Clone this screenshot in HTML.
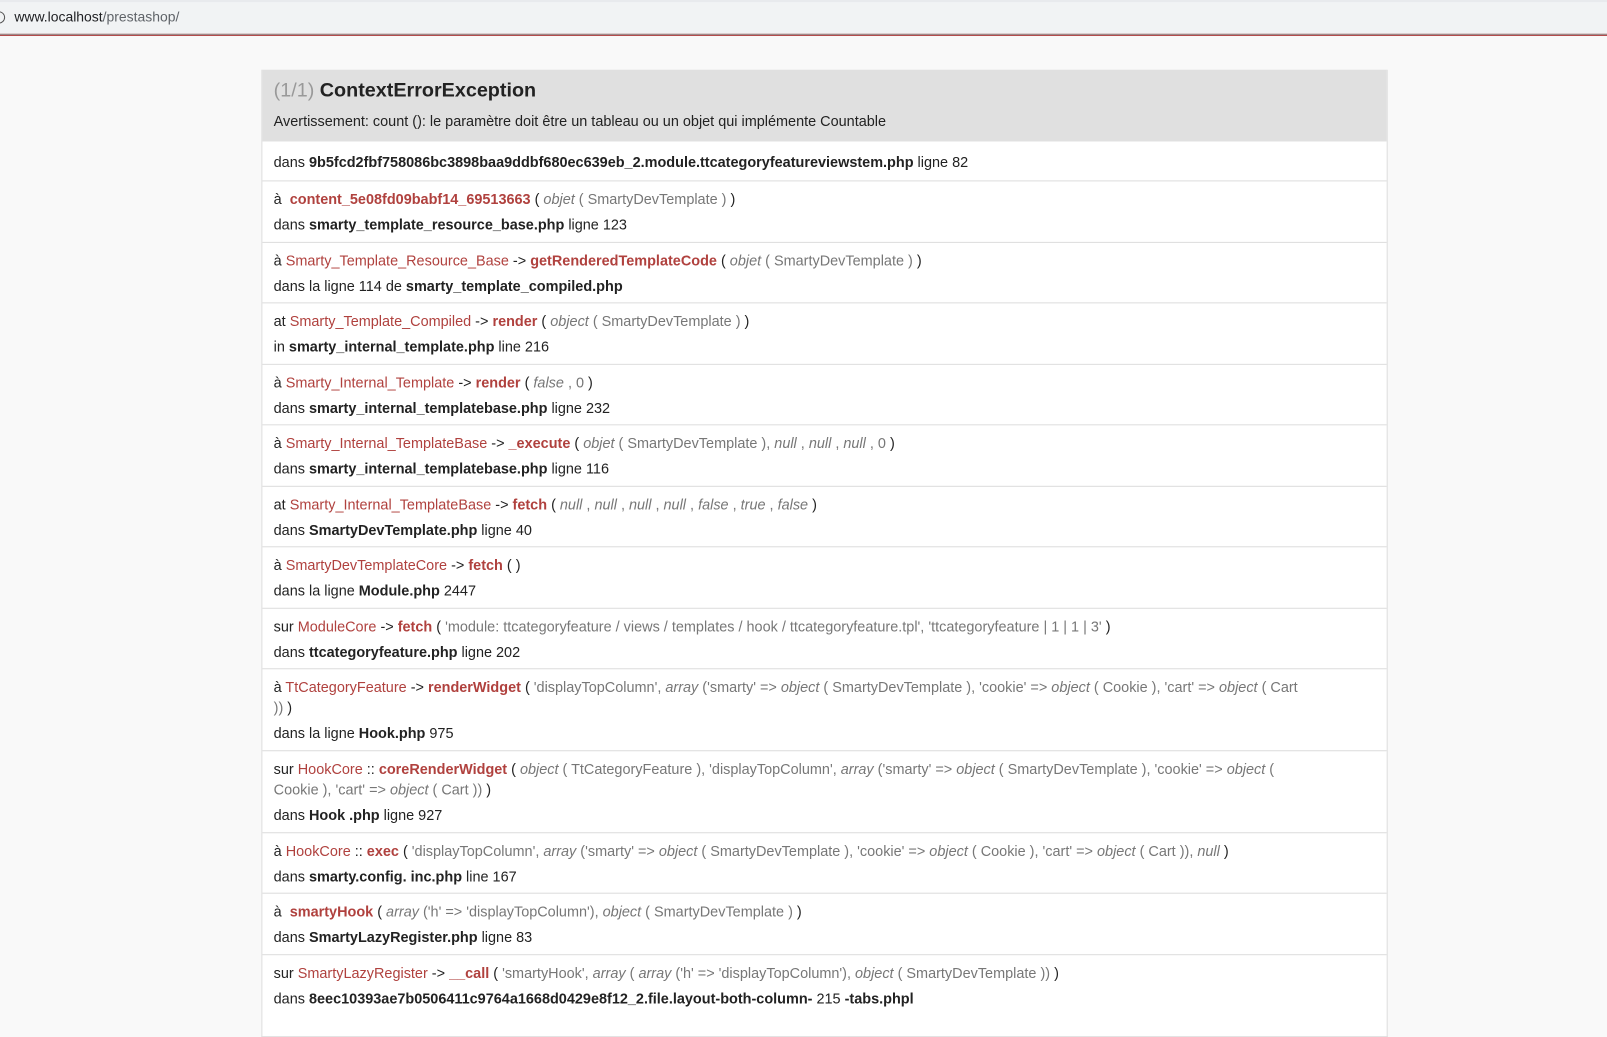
<!DOCTYPE html>
<html><head><meta charset="utf-8"><style>
*{margin:0;padding:0;box-sizing:border-box}
body{width:1607px;height:1003px;overflow:hidden;background:#f9f9f9;font-family:"Liberation Sans",Arial,sans-serif;font-size:14.1px;color:#222}
#w{position:absolute;left:0;top:0;width:1568px;height:980px;transform:scale(1.0249);transform-origin:0 0}
.bar{position:absolute;left:0;top:0;width:1568px;height:33px;background:#f1f3f4;border-top:2px solid #e8eaed}
.bar span{position:absolute;left:14px;top:7px;font-size:13.6px;color:#202124}
.bar span i{font-style:normal;color:#5f6368}
.bar .c{position:absolute;left:-7px;top:9px;width:12px;height:12px;border:1.5px solid #555;border-radius:50%}
.red{position:absolute;left:0;top:33px;width:1568px;height:2px;background:#a33;border-top:1px solid #999}
.box{position:absolute;left:255px;top:68px;width:1099px;border:1px solid #ddd;border-top:none;background:#fff}
.hd{height:69px;background:#e0e0e0;padding:0 11px;position:relative}
.hd h1{position:absolute;top:10px;left:11px;font-size:19.3px;font-weight:bold;color:#222}
.hd h1 span{color:#999;font-weight:normal}
.hd p{position:absolute;top:42px;left:11px}
.r{border-top:1px solid #ddd;padding:0 11px;position:relative;white-space:nowrap}
.l1{position:absolute;left:11px;top:7px;line-height:20px}
.l2{position:absolute;left:11px;line-height:20px}
.k{color:#b0413e}
.f{color:#b0413e;font-weight:bold}
.a{color:#777}
i{color:#777}
b{font-weight:bold}
</style></head><body><div id="w">
<div class="bar"><div class="c"></div><span>www.localhost<i>/prestashop/</i></span></div>
<div class="red"></div>
<div class="box">
<div class="hd"><h1><span>(1/1)</span> ContextErrorException</h1><p>Avertissement: count (): le paramètre doit être un tableau ou un objet qui implémente Countable</p></div>
<div class="r" style="height:39px"><div class="l1" style="top:10px">dans <b>9b5fcd2fbf758086bc3898baa9ddbf680ec639eb_2.module.ttcategoryfeatureviewstem.php</b> ligne 82</div></div>
<div class="r" style="height:60px"><div class="l1">à &nbsp;<span class="f">content_5e08fd09babf14_69513663</span> ( <span class="a"><i>objet</i> ( SmartyDevTemplate ) </span>)</div><div class="l2" style="top:32px">dans <b>smarty_template_resource_base.php</b> ligne 123</div></div>
<div class="r" style="height:59px"><div class="l1">à <span class="k">Smarty_Template_Resource_Base</span> -&gt; <span class="f">getRenderedTemplateCode</span> ( <span class="a"><i>objet</i> ( SmartyDevTemplate ) </span>)</div><div class="l2" style="top:32px">dans la ligne 114 de <b>smarty_template_compiled.php</b></div></div>
<div class="r" style="height:60px"><div class="l1">at <span class="k">Smarty_Template_Compiled</span> -&gt; <span class="f">render</span> ( <span class="a"><i>object</i> ( SmartyDevTemplate ) </span>)</div><div class="l2" style="top:32px">in <b>smarty_internal_template.php</b> line 216</div></div>
<div class="r" style="height:59px"><div class="l1">à <span class="k">Smarty_Internal_Template</span> -&gt; <span class="f">render</span> ( <span class="a"><i>false</i> , 0 </span>)</div><div class="l2" style="top:32px">dans <b>smarty_internal_templatebase.php</b> ligne 232</div></div>
<div class="r" style="height:60px"><div class="l1">à <span class="k">Smarty_Internal_TemplateBase</span> -&gt; <span class="f">_execute</span> ( <span class="a"><i>objet</i> ( SmartyDevTemplate ), <i>null</i> , <i>null</i> , <i>null</i> , 0 </span>)</div><div class="l2" style="top:32px">dans <b>smarty_internal_templatebase.php</b> ligne 116</div></div>
<div class="r" style="height:59px"><div class="l1">at <span class="k">Smarty_Internal_TemplateBase</span> -&gt; <span class="f">fetch</span> ( <span class="a"><i>null</i> , <i>null</i> , <i>null</i> , <i>null</i> , <i>false</i> , <i>true</i> , <i>false</i> </span>)</div><div class="l2" style="top:32px">dans <b>SmartyDevTemplate.php</b> ligne 40</div></div>
<div class="r" style="height:60px"><div class="l1">à <span class="k">SmartyDevTemplateCore</span> -&gt; <span class="f">fetch</span> ( )</div><div class="l2" style="top:32px">dans la ligne <b>Module.php</b> 2447</div></div>
<div class="r" style="height:59px"><div class="l1">sur <span class="k">ModuleCore</span> -&gt; <span class="f">fetch</span> ( <span class="a">'module: ttcategoryfeature / views / templates / hook / ttcategoryfeature.tpl', 'ttcategoryfeature | 1 | 1 | 3' </span>)</div><div class="l2" style="top:32px">dans <b>ttcategoryfeature.php</b> ligne 202</div></div>
<div class="r" style="height:80px"><div class="l1">à <span class="k">TtCategoryFeature</span> -&gt; <span class="f">renderWidget</span> ( <span class="a">'displayTopColumn', <i>array</i> ('smarty' =&gt; <i>object</i> ( SmartyDevTemplate ), 'cookie' =&gt; <i>object</i> ( Cookie ), 'cart' =&gt; <i>object</i> ( Cart<br>)) </span>)</div><div class="l2" style="top:52px">dans la ligne <b>Hook.php</b> 975</div></div>
<div class="r" style="height:80px"><div class="l1">sur <span class="k">HookCore</span> :: <span class="f">coreRenderWidget</span> ( <span class="a"><i>object</i> ( TtCategoryFeature ), 'displayTopColumn', <i>array</i> ('smarty' =&gt; <i>object</i> ( SmartyDevTemplate ), 'cookie' =&gt; <i>object</i> (<br>Cookie ), 'cart' =&gt; <i>object</i> ( Cart )) </span>)</div><div class="l2" style="top:52px">dans <b>Hook .php</b> ligne 927</div></div>
<div class="r" style="height:59px"><div class="l1">à <span class="k">HookCore</span> :: <span class="f">exec</span> ( <span class="a">'displayTopColumn', <i>array</i> ('smarty' =&gt; <i>object</i> ( SmartyDevTemplate ), 'cookie' =&gt; <i>object</i> ( Cookie ), 'cart' =&gt; <i>object</i> ( Cart )), <i>null</i> </span>)</div><div class="l2" style="top:32px">dans <b>smarty.config. inc.php</b> line 167</div></div>
<div class="r" style="height:60px"><div class="l1">à &nbsp;<span class="f">smartyHook</span> ( <span class="a"><i>array</i> ('h' =&gt; 'displayTopColumn'), <i>object</i> ( SmartyDevTemplate ) </span>)</div><div class="l2" style="top:32px">dans <b>SmartyLazyRegister.php</b> ligne 83</div></div>
<div class="r" style="height:80px"><div class="l1">sur <span class="k">SmartyLazyRegister</span> -&gt; <span class="f">__call</span> ( <span class="a">'smartyHook', <i>array</i> ( <i>array</i> ('h' =&gt; 'displayTopColumn'), <i>object</i> ( SmartyDevTemplate )) </span>)</div><div class="l2" style="top:32px">dans <b>8eec10393ae7b0506411c9764a1668d0429e8f12_2.file.layout-both-column-</b> 215 <b>-tabs.phpl</b></div></div>
</div>
</div></body></html>
